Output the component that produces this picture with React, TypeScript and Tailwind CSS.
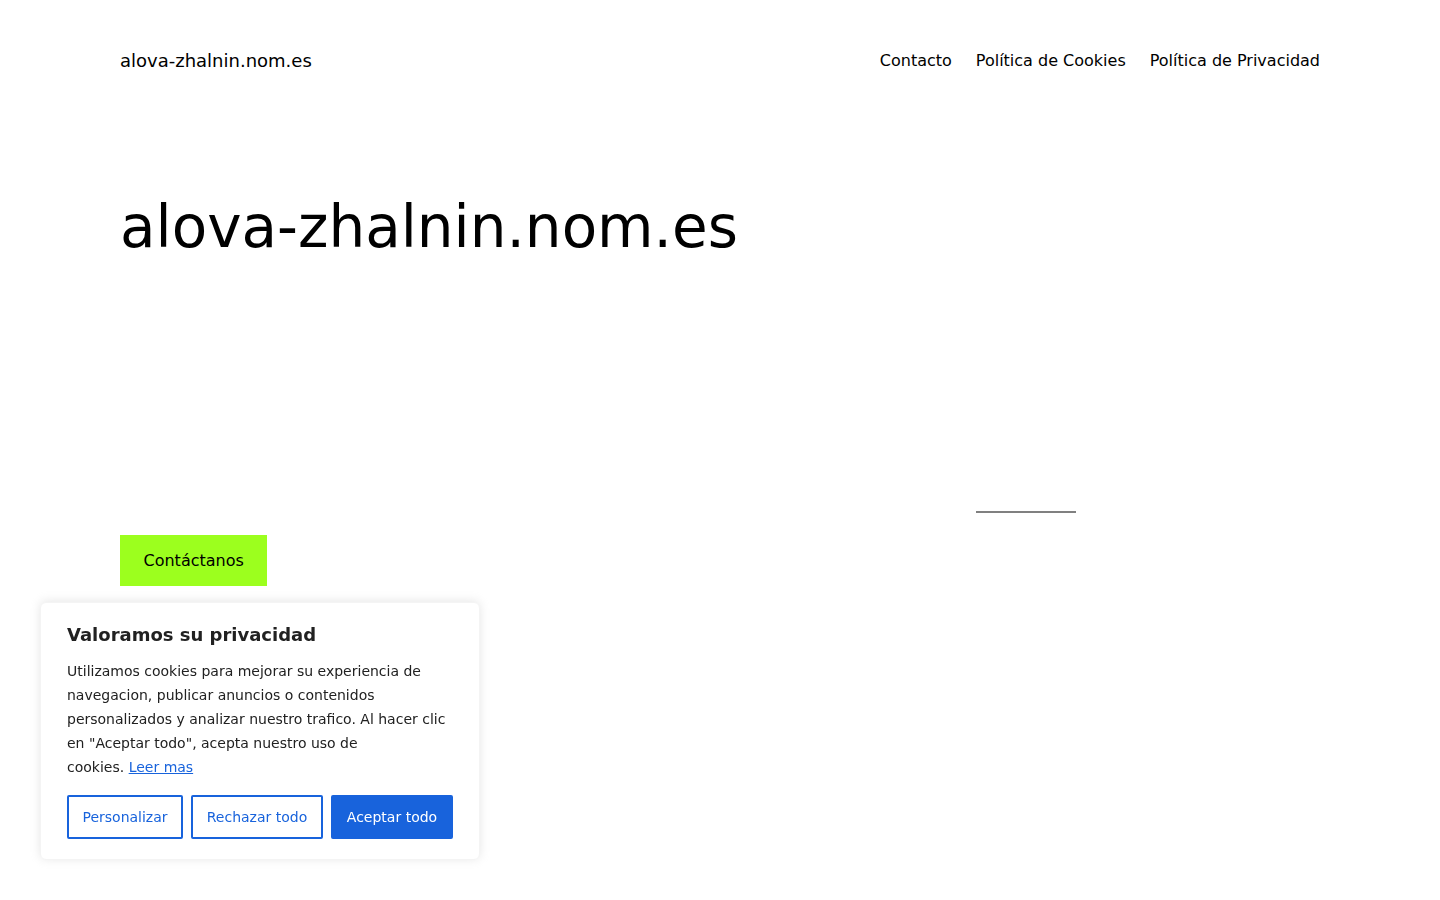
export default function App() {
  return (
    <div className="relative min-h-screen bg-white text-black" style={{ fontFamily: '"DejaVu Sans", Verdana, sans-serif' }}>
      <div className="px-[120px]">
        {/* Header */}
        <header className="flex h-[120px] items-center justify-between pt-[2px]">
          <a href="#" className="text-[18px] leading-[24px] text-black">
            alova-zhalnin.nom.es
          </a>
          <nav className="flex items-center gap-[24px] text-[16px] leading-[24px]">
            <a href="#">Contacto</a>
            <a href="#">Política de Cookies</a>
            <a href="#">Política de Privacidad</a>
          </nav>
        </header>

        {/* Hero */}
        <section>
          <h1 className="mt-[72px] text-[58px] leading-[70px] font-normal">alova-zhalnin.nom.es</h1>
          <div className="grid h-[251px] grid-cols-[856px_1fr] items-end">
            <div />
            <div className="h-[2px] w-[100px] bg-[#808080]" />
          </div>
          <a
            href="#"
            className="mt-[22px] inline-block bg-[#9cff1e] px-[23.5px] py-[15px] text-[16px] leading-[21px] text-black"
          >
            Contáctanos
          </a>
        </section>
      </div>

      {/* Cookie banner */}
      <div className="fixed bottom-[40px] left-[40px] w-[440px] rounded-[6px] border border-[#f4f4f4] bg-white px-[26px] pt-[20px] pb-[20px] shadow-[0_-1px_10px_0_rgba(172,171,171,0.3)]">
        <p className="mb-[12px] text-[18px] leading-[24px] font-bold text-[#212121]">Valoramos su privacidad</p>
        <p className="text-[14px] leading-[24px] text-[#212121]">
          Utilizamos cookies para mejorar su experiencia de navegacion, publicar anuncios o contenidos personalizados y
          analizar nuestro trafico. Al hacer clic en "Aceptar todo", acepta nuestro uso de
          <br />
          cookies.{" "}
          <a href="#" className="text-[#1863dc] underline">
            Leer mas
          </a>
        </p>
        <div className="mt-[16px] flex gap-[8px] text-[14px] leading-[24px]">
          <button className="h-[44px] w-[116px] rounded-[2px] border-2 border-[#1863dc] bg-white text-[#1863dc]">
            Personalizar
          </button>
          <button className="h-[44px] w-[132px] rounded-[2px] border-2 border-[#1863dc] bg-white text-[#1863dc]">
            Rechazar todo
          </button>
          <button className="h-[44px] w-[122px] rounded-[2px] border-2 border-[#1863dc] bg-[#1863dc] text-white">
            Aceptar todo
          </button>
        </div>
      </div>
    </div>
  );
}
